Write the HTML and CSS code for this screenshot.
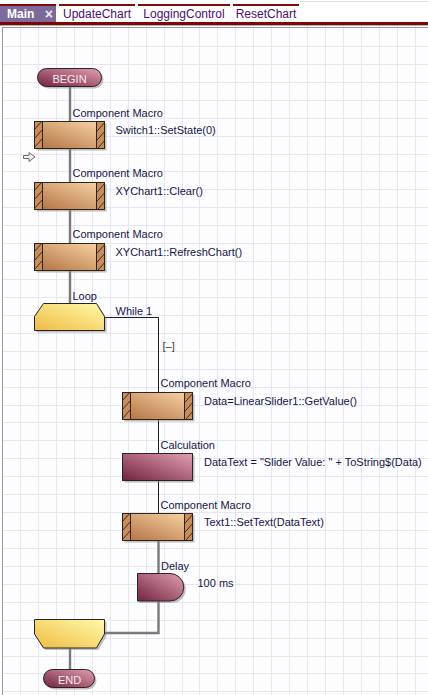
FILE: index.html
```html
<!DOCTYPE html>
<html>
<head>
<meta charset="utf-8">
<link rel="stylesheet" href="styles.css">
</head>
<body>
<div class="tabs">
  <div class="tab tab-main"><span class="tab-title">Main</span><span class="tab-close">×</span></div>
  <div class="tab tab-update">UpdateChart</div>
  <div class="tab tab-logging">LoggingControl</div>
  <div class="tab tab-reset">ResetChart</div>
</div>
<div class="rule-dark"></div>
<div class="rule-light"></div>
<div class="canvas">
<svg class="chart" width="428" height="669" viewBox="0 26 428 669" xmlns="http://www.w3.org/2000/svg" xmlns:xlink="http://www.w3.org/1999/xlink">
  <defs>
    <linearGradient id="gm" x1="0" y1="1" x2="1" y2="0">
      <stop offset="0" stop-color="#b06f40"/>
      <stop offset="1" stop-color="#fad7a8"/>
    </linearGradient>
    <linearGradient id="gy" x1="0" y1="1" x2="1" y2="0">
      <stop offset="0" stop-color="#efbb44"/>
      <stop offset="1" stop-color="#fffaa8"/>
    </linearGradient>
    <linearGradient id="gr" x1="0" y1="1" x2="1" y2="0">
      <stop offset="0" stop-color="#722240"/>
      <stop offset="1" stop-color="#e2a0b2"/>
    </linearGradient>
    <pattern id="hatch" width="8" height="9" patternUnits="userSpaceOnUse">
      <rect width="8" height="9" fill="#c98c5b"/>
      <path d="M0 9 L8 0" stroke="#3a2a1e" stroke-width="1"/>
    </pattern>
    <symbol id="macro" width="74" height="31" viewBox="0 0 74 31" overflow="visible">
      <rect class="shadow" x="2.5" y="2.5" width="70" height="27"/>
      <rect x="0.5" y="0.5" width="70" height="27" fill="url(#gm)" class="edge"/>
      <rect x="0.5" y="0.5" width="8" height="27" fill="url(#hatch)" class="edge"/>
      <rect x="62.5" y="0.5" width="8" height="27" fill="url(#hatch)" class="edge"/>
    </symbol>
  </defs>

  <path class="grid" d="M20.5 26V695M38.5 26V695M56.5 26V695M74.5 26V695M92.5 26V695M110.5 26V695M128.5 26V695M146.5 26V695M164.5 26V695M182.5 26V695M199.5 26V695M217.5 26V695M235.5 26V695M253.5 26V695M271.5 26V695M289.5 26V695M307.5 26V695M325.5 26V695M343.5 26V695M361.5 26V695M379.5 26V695M397.5 26V695M415.5 26V695
  M2 46.5H428M2 64.5H428M2 82.5H428M2 100.5H428M2 118.5H428M2 136.5H428M2 154.5H428M2 171.5H428M2 189.5H428M2 207.5H428M2 225.5H428M2 243.5H428M2 261.5H428M2 279.5H428M2 297.5H428M2 315.5H428M2 333.5H428M2 351.5H428M2 369.5H428M2 387.5H428M2 405.5H428M2 422.5H428M2 440.5H428M2 458.5H428M2 476.5H428M2 494.5H428M2 512.5H428M2 530.5H428M2 548.5H428M2 566.5H428M2 584.5H428M2 602.5H428M2 620.5H428M2 638.5H428M2 656.5H428M2 673.5H428M2 691.5H428"/>
  <path class="border" d="M2.5 695V27.5H428"/>

  <!-- main column wires -->
  <path class="wire" d="M70 87V121M70 148.5V182M70 209.5V243M70 270.5V303.5M70 648V669.5"/>
  <!-- loop wires -->
  <path class="wire-thin" d="M104.5 317.5H158.5V392M158.5 419.5V453M158.5 480.5V513"/>
  <path class="wire" d="M158.5 540.5V573.5M158.5 601V633H104.5"/>

  <!-- BEGIN -->
  <rect class="shadow" x="39.5" y="70.5" width="64" height="18" rx="9"/>
  <rect x="37.5" y="68.5" width="64" height="18" rx="9" fill="url(#gr)" class="edge-dark"/>
  <text class="pill-text" x="69.5" y="82.5">BEGIN</text>

  <!-- macro 1 -->
  <use xlink:href="#macro" href="#macro" x="34" y="121"/>
  <text class="label" x="72.5" y="116.5">Component Macro</text>
  <text class="label" x="115.5" y="134">Switch1::SetState(0)</text>

  <!-- current step arrow -->
  <path class="step-arrow" d="M23.5 155.5H29V152.5L35 157L29 161.5V158.5H23.5Z"/>

  <!-- macro 2 -->
  <use xlink:href="#macro" href="#macro" x="34" y="182"/>
  <text class="label" x="72.5" y="176.5">Component Macro</text>
  <text class="label" x="115.5" y="195">XYChart1::Clear()</text>

  <!-- macro 3 -->
  <use xlink:href="#macro" href="#macro" x="34" y="243"/>
  <text class="label" x="72.5" y="237.5">Component Macro</text>
  <text class="label" x="115.5" y="256">XYChart1::RefreshChart()</text>

  <!-- loop start -->
  <path class="shadow" d="M45.5 305.5H98.5L106.5 318.5V332.5H36.5V318.5Z"/>
  <path d="M43.5 303.5H96.5L104.5 316.5V330.5H34.5V316.5Z" fill="url(#gy)" class="edge-dark"/>
  <text class="label" x="72.5" y="299.5">Loop</text>
  <text class="label" x="115.5" y="315">While 1</text>
  <text class="collapse" x="162.5" y="349.5">[–]</text>

  <!-- macro 4 -->
  <use xlink:href="#macro" href="#macro" x="122" y="392"/>
  <text class="label" x="160.5" y="387">Component Macro</text>
  <text class="label" x="204" y="404.5">Data=LinearSlider1::GetValue()</text>

  <!-- calculation -->
  <rect class="shadow" x="124.5" y="455.5" width="70" height="27"/>
  <rect x="122.5" y="453.5" width="70" height="27" fill="url(#gr)" class="edge-dark"/>
  <text class="label" x="160.5" y="448.5">Calculation</text>
  <text class="label" x="204" y="465.5">DataText = "Slider Value: " + ToString$(Data)</text>

  <!-- macro 5 -->
  <use xlink:href="#macro" href="#macro" x="122" y="513"/>
  <text class="label" x="160.5" y="508.5">Component Macro</text>
  <text class="label" x="204" y="526">Text1::SetText(DataText)</text>

  <!-- delay -->
  <path class="shadow" d="M139.5 575.5H172A13.75 13.75 0 0 1 172 603H139.5Z"/>
  <path d="M137.5 573.5H170A13.75 13.75 0 0 1 170 601H137.5Z" fill="url(#gr)" class="edge-dark"/>
  <text class="label" x="161" y="570">Delay</text>
  <text class="label" x="197.5" y="587">100 ms</text>

  <!-- loop end -->
  <path class="shadow" d="M36.5 621.5H106.5V636L98.5 650H45.5L36.5 636Z"/>
  <path d="M34.5 619.5H104.5V634L96.5 648H43.5L34.5 634Z" fill="url(#gy)" class="edge-dark"/>

  <!-- END -->
  <rect class="shadow" x="45.5" y="671.5" width="51" height="18" rx="9"/>
  <rect x="43.5" y="669.5" width="51" height="18" rx="9" fill="url(#gr)" class="edge-dark"/>
  <text class="pill-text" x="69.5" y="683.5">END</text>
</svg>
</div>
</body>
</html>
```
FILE: styles.css
```css
html, body {
  margin: 0;
  padding: 0;
  background: #ffffff;
  width: 428px;
  height: 695px;
  overflow: hidden;
}

.tabs {
  display: flex;
  gap: 3px;
  height: 22px;
  padding-top: 4px;
  box-sizing: border-box;
  font-family: "Liberation Sans", Arial, sans-serif;
  font-size: 12px;
  background: linear-gradient(#ffffff 0, #ffffff 1px, #e2e2e2 1px, #e2e2e2 2px, #ffffff 2px);
  background-size: 128px 100%;
  background-position: 300px 0;
  background-repeat: no-repeat;
}

.tab {
  height: 18px;
  border-top: 2px solid #820a0a;
  box-sizing: border-box;
  line-height: 16px;
  color: #4b0f6e;
  text-align: center;
  white-space: nowrap;
}

.tab-main {
  width: 56px;
  background: #7c6a9d;
  color: #ffffff;
  display: flex;
  align-items: center;
  justify-content: space-between;
  padding: 0 3px 0 7px;
}

.tab-title {
  font-weight: bold;
}

.tab-close {
  font-weight: bold;
  font-size: 14px;
  color: #ecebf2;
}

.tab-update { width: 76px; }
.tab-logging { width: 92px; }
.tab-reset { width: 66px; }

.rule-dark {
  height: 3px;
  background: #7d0505;
}

.rule-light {
  height: 1px;
  background: #b4b4b4;
}

.canvas {
  height: 669px;
  background: #fdfdff;
}

.chart {
  display: block;
  font-family: "Liberation Sans", Arial, sans-serif;
}

.grid {
  stroke: #e6e6f7;
  stroke-width: 1;
  fill: none;
}

.border {
  stroke: #9a9a9a;
  stroke-width: 1;
  fill: none;
}

.wire {
  stroke: #7a7a7a;
  stroke-width: 2.4;
  fill: none;
}

.wire-thin {
  stroke: #1e1e1e;
  stroke-width: 1;
  fill: none;
}

.shadow {
  fill: #8c8c8c;
  opacity: 0.55;
}

.edge {
  stroke: #2e2418;
  stroke-width: 1;
}

.edge-dark {
  stroke: #2a2224;
  stroke-width: 1;
}

.label {
  font-size: 11px;
  fill: #151545;
}

.pill-text {
  font-size: 11px;
  fill: #f6e8ef;
  text-anchor: middle;
}

.collapse {
  font-size: 11px;
  fill: #3c3c3c;
}

.step-arrow {
  fill: #eeeeee;
  stroke: #6e6e6e;
  stroke-width: 1;
}
```
